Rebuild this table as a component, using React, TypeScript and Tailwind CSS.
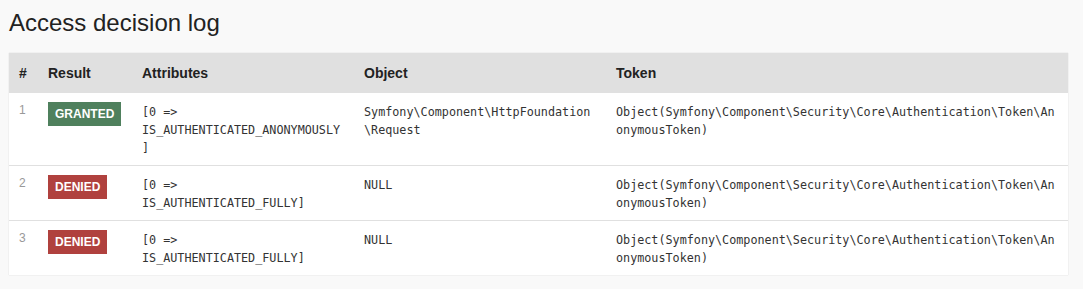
import React from 'react';

type Row = {
  id: number;
  result: 'GRANTED' | 'DENIED';
  attributes: string;
  object: string;
  token: string;
};

const TOKEN = 'Object(Symfony\\Component\\Security\\Core\\Authentication\\Token\\AnonymousToken)';

const ROWS: Row[] = [
  { id: 1, result: 'GRANTED', attributes: '[0 => IS_AUTHENTICATED_ANONYMOUSLY]', object: 'Symfony\\Component\\HttpFoundation\\Request', token: TOKEN },
  { id: 2, result: 'DENIED',  attributes: '[0 => IS_AUTHENTICATED_FULLY]',       object: 'NULL', token: TOKEN },
  { id: 3, result: 'DENIED',  attributes: '[0 => IS_AUTHENTICATED_FULLY]',       object: 'NULL', token: TOKEN },
];

// code cells: wrap long class names anywhere, like the profiler does
const mono = "px-[10px] pt-[10px] pb-2 align-top font-['DejaVu_Sans_Mono','Liberation_Mono',monospace] text-[11.75px] leading-[18px] text-[#333] [overflow-wrap:anywhere]";

export default function App() {
  return (
    <div className="min-h-screen bg-[#f9f9f9] px-[9px] pt-[9px] font-['Liberation_Sans',Arial,sans-serif] text-[#222]">
      <h2 className="text-[24px] leading-[28px] font-normal mb-4">Access decision log</h2>

      <table className="table-fixed w-[1059px] bg-white border-collapse shadow-[0_0_1px_rgba(128,128,128,0.35)]">
        <colgroup>
          <col className="w-[29px]" />
          <col className="w-[94px]" />
          <col className="w-[222px]" />
          <col className="w-[252px]" />
          <col className="w-[462px]" />
        </colgroup>
        <thead>
          <tr className="bg-[#e0e0e0] h-[40px] text-left text-[14px] font-bold">
            <th className="px-[10px] pt-px pb-0 text-left">#</th>
            <th className="px-[10px] pt-px pb-0 text-left">Result</th>
            <th className="px-[10px] pt-px pb-0 text-left">Attributes</th>
            <th className="px-[10px] pt-px pb-0 text-left">Object</th>
            <th className="px-[10px] pt-px pb-0 text-left">Token</th>
          </tr>
        </thead>
        <tbody>
          {ROWS.map((r, i) => (
            <tr key={r.id} className={i > 0 ? 'border-t border-[#e0e0e0]' : ''}>
              <td className="px-[10px] pt-2 pb-[10px] align-top text-[12px] leading-[18px] text-[#999]">{r.id}</td>
              <td className="px-[10px] pt-2 pb-[10px] align-top">
                <span
                  className={`inline-block h-6 px-[7px] text-[12px] leading-6 font-bold text-white ${
                    r.result === 'GRANTED' ? 'bg-[#4f805d]' : 'bg-[#b0413e]'
                  }`}
                >
                  {r.result}
                </span>
              </td>
              <td className={mono}>{r.attributes}</td>
              <td className={mono}>{r.object}</td>
              <td className={mono}>{r.token}</td>
            </tr>
          ))}
        </tbody>
      </table>
    </div>
  );
}
